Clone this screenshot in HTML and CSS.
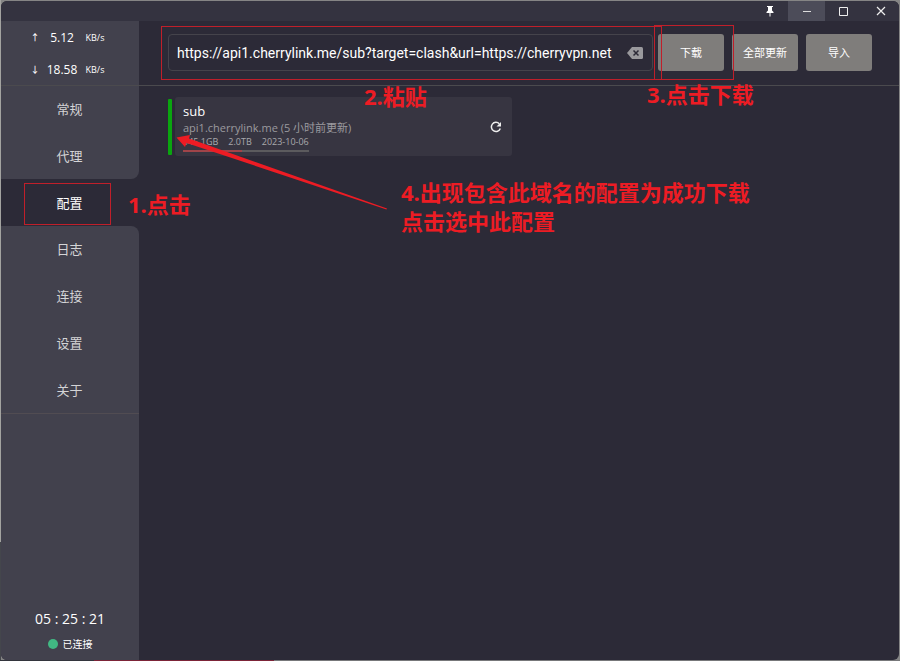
FILE: index.html
```html
<!DOCTYPE html>
<html lang="zh-CN">
<head>
<meta charset="utf-8">
<title>配置</title>
<link rel="stylesheet" href="styles.css">
</head>
<body>
<div class="window">
  <header class="titlebar">
    <button class="win-btn" aria-label="置顶"><svg width="12" height="12" viewBox="0 0 12 12"><path d="M3 1h6v1H8v3.500L9.500 7v1H6.500v3.500h-1V8h-3V7L4 5.500V2H3z" fill="#fff"/></svg></button>
    <button class="win-btn win-btn-active" aria-label="最小化"><svg width="12" height="12" viewBox="0 0 12 12"><path d="M2 6.500h8" stroke="#ddd"/></svg></button>
    <button class="win-btn" aria-label="最大化"><svg width="12" height="12" viewBox="0 0 12 12"><path d="M1.500 2.500h8v8h-8z" fill="none" stroke="#eee"/></svg></button>
    <button class="win-btn" aria-label="关闭"><svg width="12" height="12" viewBox="0 0 12 12"><path d="M2 2l8 8M10 2l-8 8" stroke="#eee" stroke-width="1.200"/></svg></button>
  </header>
  <div class="body">
    <aside class="sidebar">
      <div class="traffic">
        <div class="rate"><span>↑</span><span class="rate-value">5.12</span><span>KB/s</span></div>
        <div class="rate"><span>↓</span><span class="rate-value">18.58</span><span>KB/s</span></div>
      </div>
      <nav class="nav">
        <a href="#general">常规</a>
        <a href="#proxies" class="before-current">代理</a>
        <a href="#profiles" class="current" aria-current="page">配置</a>
        <a href="#logs" class="after-current">日志</a>
        <a href="#connections">连接</a>
        <a href="#settings">设置</a>
        <a href="#about">关于</a>
      </nav>
      <div class="status">
        <div class="clock">05 : 25 : 21</div>
        <div class="connected"><span class="dot"></span>已连接</div>
      </div>
    </aside>
    <main class="main">
      <div class="toolbar">
        <div class="url-field">
          <input type="text" aria-label="配置链接" value="https://api1.cherrylink.me/sub?target=clash&amp;url=https://cherryvpn.net">
          <button class="clear" aria-label="清除"><svg width="16" height="12" viewBox="0 0 16 12"><path d="M5 0h9.500Q16 0 16 1.500v9Q16 12 14.500 12H5L0 6z" fill="#9a999d"/><path d="M6.500 3.500l5 5M11.500 3.500l-5 5" stroke="#2c2a37" stroke-width="1.500"/></svg></button>
        </div>
        <div class="actions">
          <button class="action">下载</button>
          <button class="action">全部更新</button>
          <button class="action">导入</button>
        </div>
      </div>
      <section class="profiles">
        <article class="profile">
          <span class="selected-bar"></span>
          <div class="card">
            <div class="info">
              <h2>sub</h2>
              <p class="source">api1.cherrylink.me (5 小时前更新)</p>
              <div class="usage">
                <p class="quota"><span>945.1GB</span><span>2.0TB</span><span>2023-10-06</span></p>
                <div class="meter"><div class="meter-fill" style="width:47%"></div></div>
              </div>
            </div>
            <button class="refresh" aria-label="更新"><svg width="12" height="12" viewBox="0 0 12 12"><path d="M9.300 2.700A4.600 4.600 0 1 0 10.300 7.500" fill="none" stroke="#eee" stroke-width="1.500"/><path d="M11 1v4.500H6.500z" fill="#eee"/></svg></button>
          </div>
        </article>
      </section>
    </main>
  </div>
</div>
<div class="notes">
  <div class="mark mark-nav"></div>
  <div class="mark mark-url"></div>
  <div class="mark mark-download"></div>
  <p class="note note-1">1.点击</p>
  <p class="note note-2">2.粘贴</p>
  <p class="note note-3">3.点击下载</p>
  <p class="note note-4">4.出现包含此域名的配置为成功下载<br>点击选中此配置</p>
  <svg class="arrow" width="212" height="76" viewBox="0 0 212 76"><path d="M0.500 2.500L14 0L13 3.500L211 73.500L210.500 74.500L10.500 8L9 12z" fill="#ed1c24"/></svg>
</div>
</body>
</html>
```
FILE: styles.css
```css
* {
  box-sizing: border-box;
}

body {
  margin: 0;
  height: 100vh;
  padding: 1px;
  overflow: hidden;
  background:
    linear-gradient(90deg, #33353d 94px, #7c2438 94px, #7c2438 274px, #77787a 274px) bottom / 100% 1px no-repeat,
    linear-gradient(#a3a3a0 82%, #44464c 82%) left / 1px 100% no-repeat,
    #858585;
  font-family: "Open Sans", "Noto Sans CJK SC", sans-serif;
  color: #fff;
}

h2,
p {
  margin: 0;
  font-weight: 400;
}

button {
  padding: 0;
  border: 0;
  background: none;
  font: inherit;
  color: inherit;
}

.window {
  height: 100%;
  display: flex;
  flex-direction: column;
  overflow: hidden;
  border-radius: 6px;
  background: #2c2a37;
}

.titlebar {
  height: 20px;
  flex: none;
  display: flex;
  justify-content: flex-end;
  background: #343340;
}

.win-btn {
  width: 37px;
  display: flex;
  align-items: center;
  justify-content: center;
}

.win-btn-active {
  background: #4c4c59;
}

.body {
  flex: 1;
  min-height: 0;
  display: flex;
}

.sidebar {
  width: 138px;
  flex: none;
  display: flex;
  flex-direction: column;
}

.traffic,
.toolbar {
  height: 65px;
  flex: none;
  border-bottom: 1px solid #4b4a4e;
}

.traffic {
  display: grid;
  grid-template-rows: 1fr 1fr;
  background: #42414d;
}

.rate {
  display: grid;
  grid-template-columns: 12px 42px 24px;
  align-items: center;
  justify-content: center;
  padding-right: 4px;
  text-align: center;
  font-size: 9px;
  font-weight: 500;
}

.rate-value {
  font-size: 12px;
}

.nav {
  height: 328px;
  flex: none;
  display: grid;
  grid-template-rows: repeat(7, 1fr);
  border-bottom: 1px solid #514c52;
}

.nav a {
  display: flex;
  align-items: center;
  justify-content: center;
  padding: 0 1px 1px 0;
  background: #42414d;
  color: #d4d4d6;
  font-size: 13px;
  text-decoration: none;
}

.nav .current {
  background: none;
  color: #fff;
}

.nav .before-current {
  border-bottom-right-radius: 8px;
}

.nav .after-current {
  border-top-right-radius: 8px;
}

.status {
  flex: 1;
  display: flex;
  flex-direction: column;
  align-items: center;
  justify-content: flex-end;
  gap: 8px;
  padding-bottom: 8px;
  background: #42414d;
}

.clock {
  font-size: 14px;
  line-height: 18px;
}

.connected {
  display: flex;
  align-items: center;
  gap: 5px;
  font-size: 10px;
  line-height: 16px;
}

.dot {
  width: 10px;
  height: 10px;
  border-radius: 50%;
  background: #41b883;
}

.main {
  flex: 1;
  min-width: 0;
}

.toolbar {
  display: flex;
  align-items: center;
  gap: 5px;
  padding: 0 27px 1px 29px;
}

.url-field {
  flex: 1;
  min-width: 0;
  height: 37px;
  display: flex;
  align-items: center;
  gap: 7px;
  padding: 0 9px 0 8px;
  border: 1px solid #45434b;
  border-radius: 4px;
}

.url-field input {
  flex: 1;
  min-width: 0;
  padding: 0;
  border: 0;
  outline: 0;
  background: none;
  color: #fff;
  font: 14px/20px Roboto, "Noto Sans CJK SC", sans-serif;
}

.clear,
.refresh {
  display: flex;
}

.actions {
  display: flex;
  gap: 8px;
}

.action {
  width: 66px;
  height: 37px;
  padding-bottom: 1px;
  border-radius: 3px;
  background: #7f7d7b;
  font-size: 11px;
}

.profiles {
  padding: 11px 29px;
}

.profile {
  width: 344px;
  display: flex;
  align-items: center;
  gap: 3px;
}

.selected-bar {
  width: 4px;
  height: 56px;
  border-radius: 1px;
  background: #0aa50f;
}

.card {
  flex: 1;
  height: 59px;
  display: flex;
  align-items: center;
  justify-content: space-between;
  padding: 0 10px 0 8px;
  border-radius: 3px;
  background: #373541;
}

.info h2 {
  font-size: 13px;
  line-height: 18px;
}

.source {
  color: #9b9a9f;
  font-size: 11px;
  line-height: 16px;
}

.usage {
  width: max-content;
}

.quota {
  display: flex;
  gap: 10px;
  color: #a9a8ac;
  font-size: 9px;
  line-height: 12px;
}

.meter {
  height: 2px;
  margin-top: 2px;
  background: #5c5b5e;
}

.meter-fill {
  height: 100%;
  background: #a04449;
}

/* Tutorial annotations drawn over the window */
.notes {
  position: absolute;
  inset: 0;
  overflow: hidden;
  pointer-events: none;
}

.mark {
  position: absolute;
  border: 1px solid #c01f2a;
}

.mark-nav {
  left: 24px;
  top: 183px;
  width: 87px;
  height: 42px;
}

.mark-url {
  left: 161px;
  top: 26px;
  width: 501px;
  height: 54px;
}

.mark-download {
  left: 654px;
  top: 25px;
  width: 80px;
  height: 55px;
}

.note {
  position: absolute;
  color: #ed1c24;
  font-size: 22px;
  font-weight: 700;
  line-height: 29px;
  white-space: nowrap;
}

.note-1 {
  left: 128px;
  top: 190px;
}

.note-2 {
  left: 364px;
  top: 82px;
}

.note-3 {
  left: 647px;
  top: 80px;
}

.note-4 {
  left: 401px;
  top: 178px;
}

.arrow {
  position: absolute;
  left: 176px;
  top: 135px;
}
```
